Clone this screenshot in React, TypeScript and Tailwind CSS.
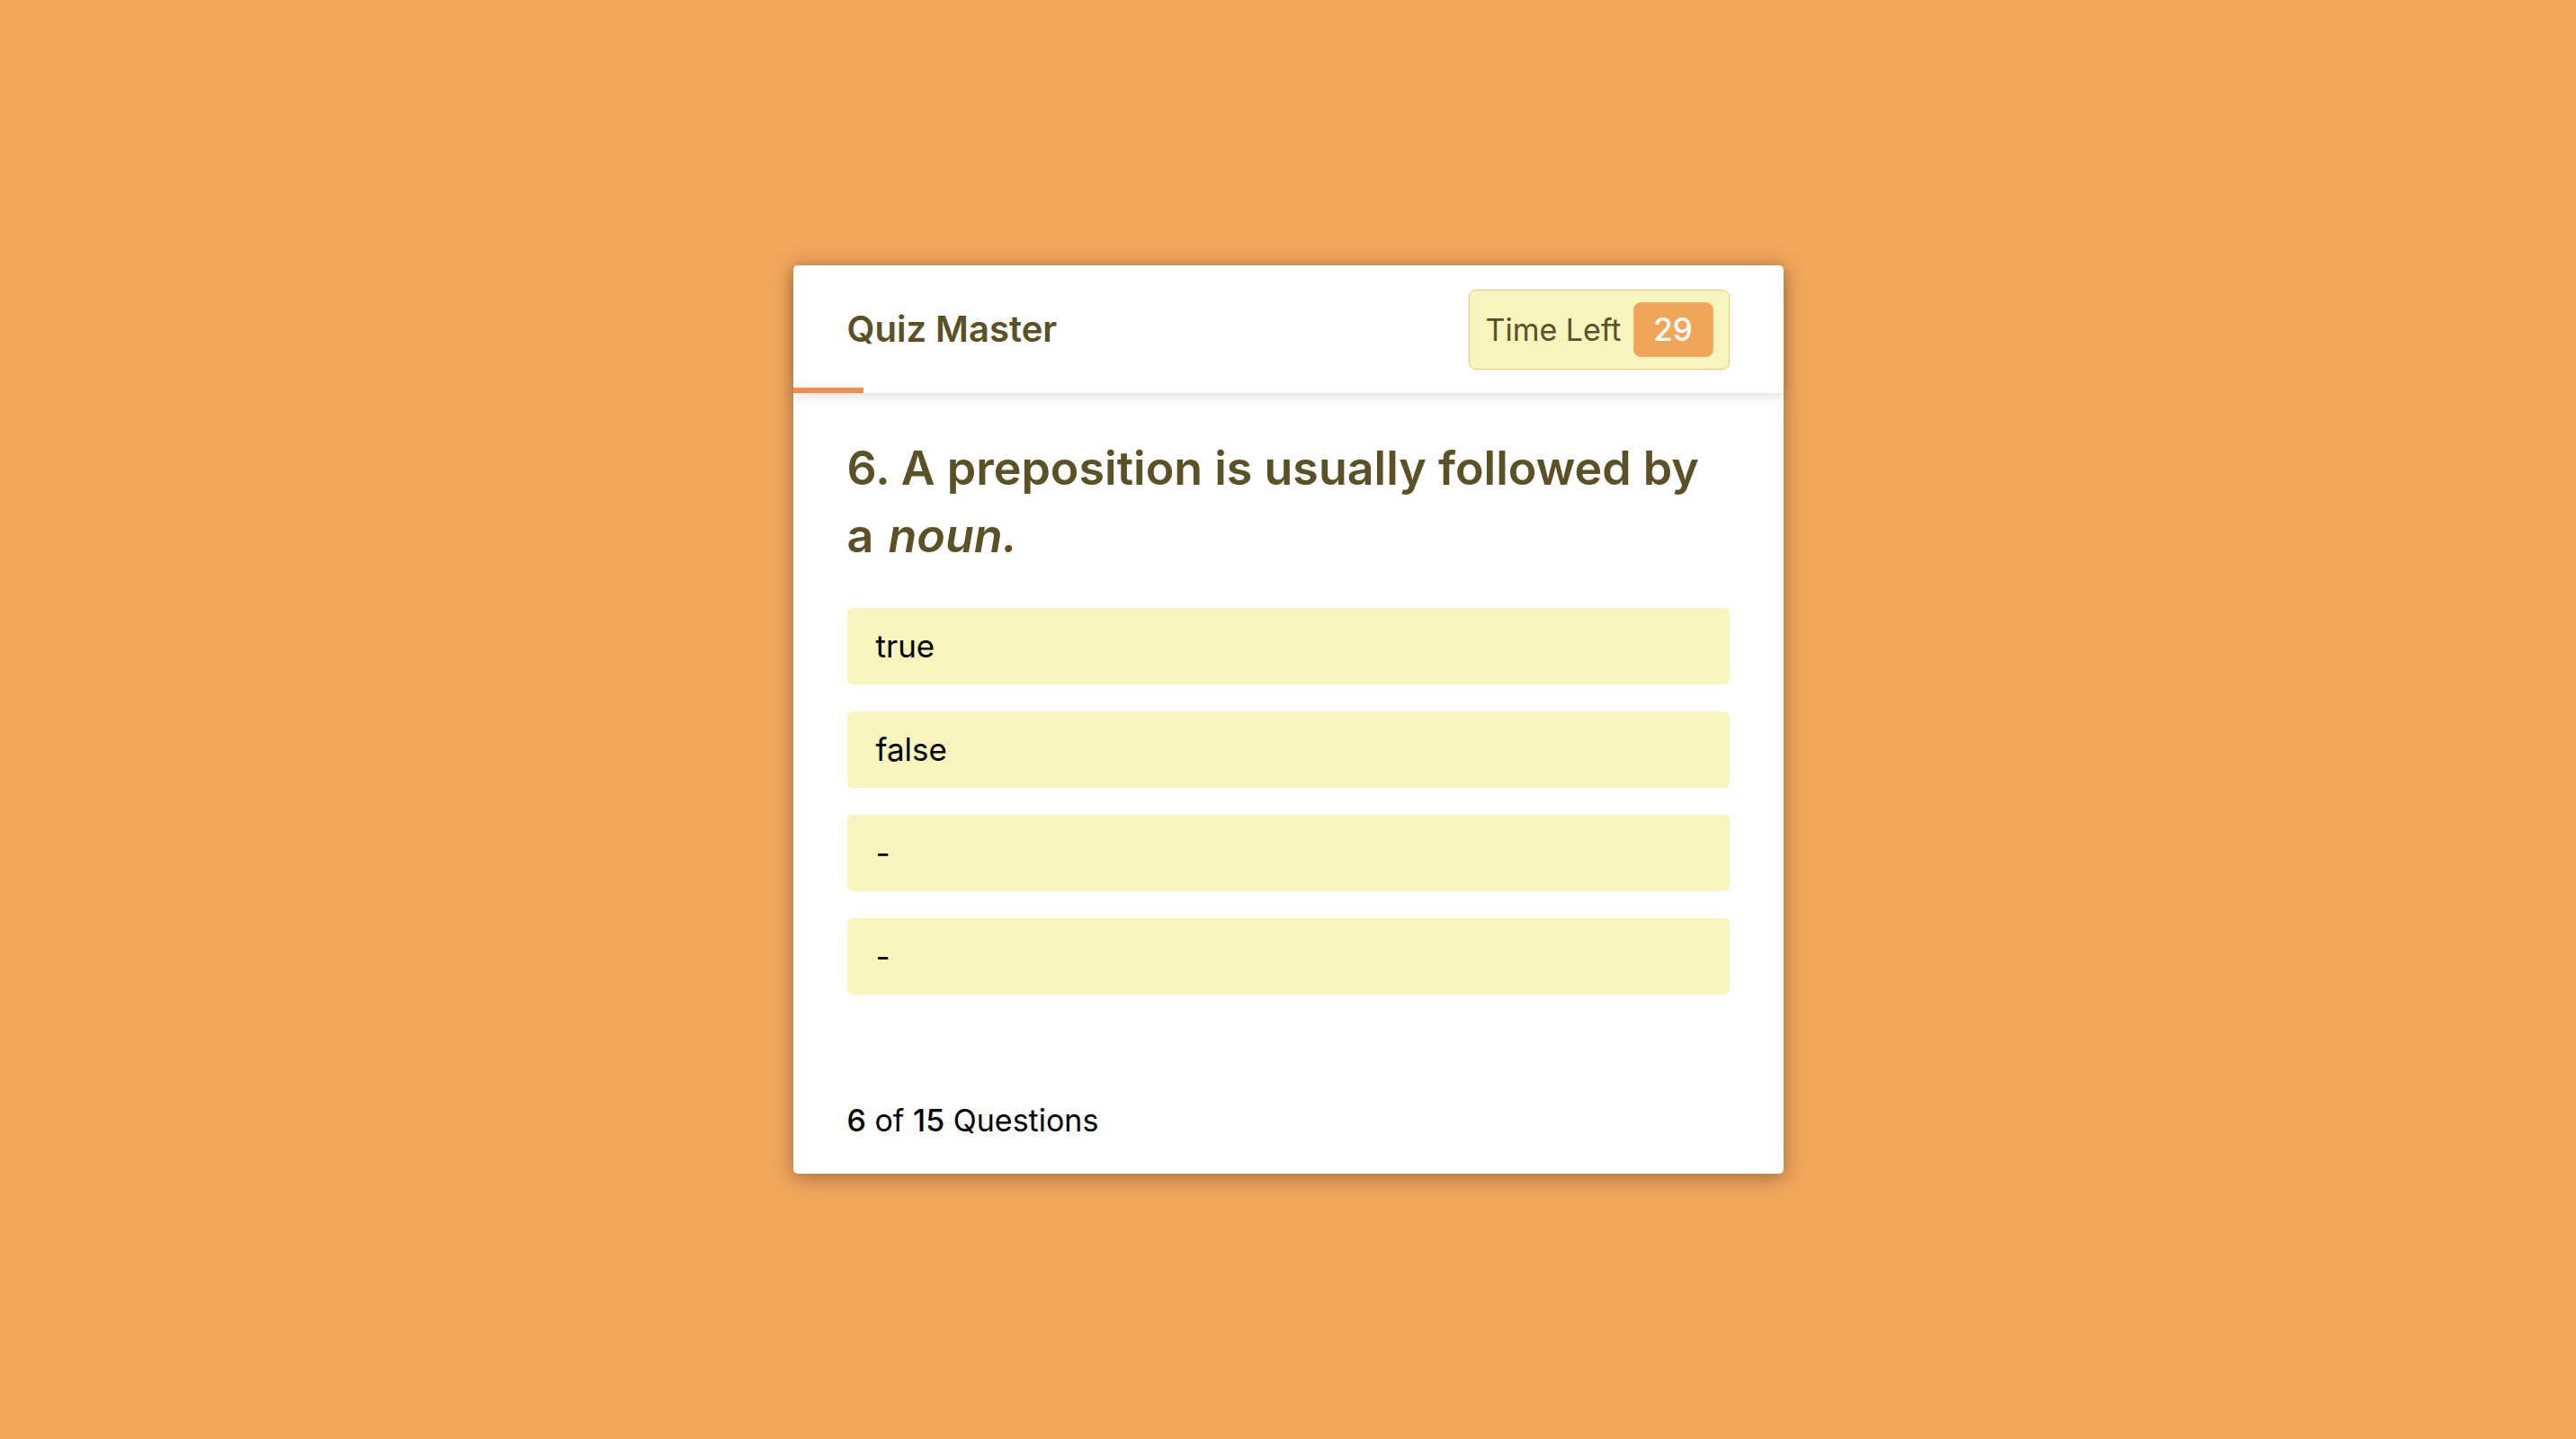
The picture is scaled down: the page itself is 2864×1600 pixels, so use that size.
import React from "react";

const options = ["true", "false", "-", "-"];

export default function App() {
  return (
    <div className="flex min-h-screen w-full items-center justify-center bg-[#f1a65b] font-['Inter','Noto_Sans',sans-serif]">
      <div className="w-[1101px] h-[1010px] flex flex-col rounded-[5px] bg-white shadow-[0_4px_22px_rgba(0,0,0,0.35)]">
        {/* header */}
        <header className="relative flex h-[142px] shrink-0 items-center justify-between px-[60px] shadow-[0_4px_12px_rgba(0,0,0,0.12)]">
          <h1 className="text-[40px] font-semibold text-[#5a5126]">Quiz Master</h1>
          <div className="flex h-[89px] w-[290px] items-center justify-between rounded-[8px] border border-[#efc676] bg-[#f7f4bd] pl-[18px] pr-[17px]">
            <span className="text-[34px] text-[#5a5126]">Time Left</span>
            <span className="flex h-[61px] w-[89px] items-center justify-center rounded-[8px] border border-[#f3b56e] bg-[#f0a55a] text-[35px] font-medium text-white">
              29
            </span>
          </div>
          <div className="absolute bottom-0 left-0 h-[6px] w-[78px] bg-[#f98a4b]" />
        </header>

        {/* question */}
        <section className="flex-1 px-[60px] pt-[46px]">
          <h2 className="text-[52px] leading-[75px] font-semibold text-[#5a5126]">
            <span>6. A preposition is usually followed by</span>{" "}
            <span className="inline-block">
              a <i className="ml-[3px]">noun.</i>
            </span>
          </h2>
          <ul className="mt-[43px] flex flex-col gap-[30px]">
            {options.map((o, i) => (
              <li
                key={i}
                className="flex h-[85px] items-center rounded-[6px] bg-[#f7f4bd] px-[32px] text-[35px] text-black"
              >
                {o}
              </li>
            ))}
          </ul>
        </section>

        {/* footer */}
        <footer className="px-[60px] pb-[34px] text-[34px] text-black">
          <span className="font-medium">6</span> of <span className="font-medium">15</span> Questions
        </footer>
      </div>
    </div>
  );
}
